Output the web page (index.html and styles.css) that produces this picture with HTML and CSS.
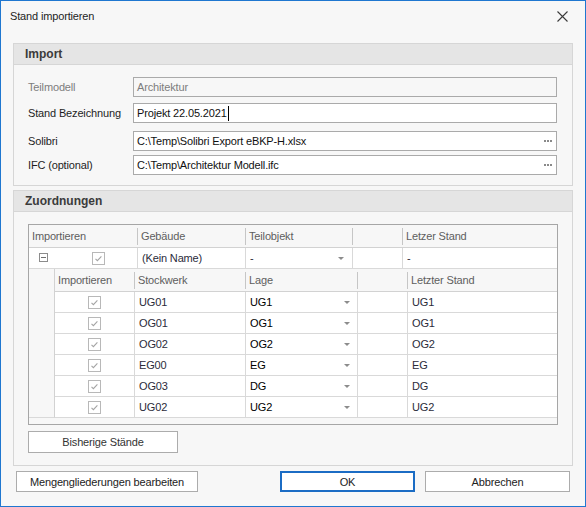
FILE: index.html
```html
<!DOCTYPE html>
<html>
<head>
<meta charset="UTF-8">
<title>Stand importieren</title>
<link rel="stylesheet" href="styles.css">
</head>
<body>

<div class="window">

  <div class="titlebar">
    <span class="title">Stand importieren</span>
    <svg class="close" width="11" height="11" viewBox="0 0 11 11">
      <path d="M0.5 0.5 L10.5 10.5 M10.5 0.5 L0.5 10.5" stroke="#3a3a3a" stroke-width="1.1" fill="none"/>
    </svg>
  </div>

  <div class="content">

    <!-- Import -->
    <div class="group">
      <div class="group-header">Import</div>
      <div class="group-body form">
        <div class="form-row">
          <span class="lbl disabled">Teilmodell</span>
          <div class="input readonly">Architektur</div>
        </div>
        <div class="form-row r2">
          <span class="lbl">Stand Bezeichnung</span>
          <div class="input"><span class="caret">Projekt 22.05.2021</span></div>
        </div>
        <div class="form-row r3">
          <span class="lbl">Solibri</span>
          <div class="input">
            <span class="val">C:\Temp\Solibri Export eBKP-H.xlsx</span>
            <svg class="dots" width="8" height="2" viewBox="0 0 8 2"><rect x="0" width="2" height="2" fill="#8a8a8a"/><rect x="3" width="2" height="2" fill="#8a8a8a"/><rect x="6" width="2" height="2" fill="#8a8a8a"/></svg>
          </div>
        </div>
        <div class="form-row r4">
          <span class="lbl">IFC (optional)</span>
          <div class="input">
            <span class="val">C:\Temp\Architektur Modell.ifc</span>
            <svg class="dots" width="8" height="2" viewBox="0 0 8 2"><rect x="0" width="2" height="2" fill="#8a8a8a"/><rect x="3" width="2" height="2" fill="#8a8a8a"/><rect x="6" width="2" height="2" fill="#8a8a8a"/></svg>
          </div>
        </div>
      </div>
    </div>

    <!-- Zuordnungen -->
    <div class="group group-map">
      <div class="group-header">Zuordnungen</div>
      <div class="group-body map">
        <div class="grid">

          <div class="row row-head">
            <div class="hc c1 first">Importieren</div>
            <div class="hc c2">Gebäude</div>
            <div class="hc c3">Teilobjekt</div>
            <div class="hc c4"></div>
            <div class="hc c5">Letzer Stand</div>
          </div>

          <div class="row row-data row-main">
            <div class="dc c1 first">
              <svg class="collapse" width="9" height="9" viewBox="0 0 9 9"><rect x="0.5" y="0.5" width="8" height="8" fill="#fff" stroke="#8c8c8c"/><path d="M2 4.5 H7" stroke="#6e6e6e"/></svg>
              <svg class="check main-check" width="13" height="13" viewBox="0 0 13 13"><rect x="0.5" y="0.5" width="12" height="12" fill="#fff" stroke="#b8b8b8"/><path d="M3.5 6.8 L5.4 8.6 L9.4 4.4" stroke="#a4a4a4" stroke-width="1.1" fill="none"/></svg>
            </div>
            <div class="dc c2">(Kein Name)</div>
            <div class="dc c3 combo"><span>-</span><i class="arrow"></i></div>
            <div class="dc c4"></div>
            <div class="dc c5">-</div>
          </div>

          <div class="detail">
            <div class="indent"></div>
            <div class="subgrid">
              <div class="row row-head">
                <div class="hc s1 first">Importieren</div>
                <div class="hc s2">Stockwerk</div>
                <div class="hc s3">Lage</div>
                <div class="hc s4"></div>
                <div class="hc s5">Letzter Stand</div>
              </div>
              <div class="row row-data">
                <div class="dc s1 first center"><svg class="check" width="13" height="13" viewBox="0 0 13 13"><rect x="0.5" y="0.5" width="12" height="12" fill="#fff" stroke="#b8b8b8"/><path d="M3.5 6.8 L5.4 8.6 L9.4 4.4" stroke="#a4a4a4" stroke-width="1.1" fill="none"/></svg></div>
                <div class="dc s2">UG01</div>
                <div class="dc s3 combo strong"><span>UG1</span><i class="arrow"></i></div>
                <div class="dc s4"></div>
                <div class="dc s5">UG1</div>
              </div>
              <div class="row row-data">
                <div class="dc s1 first center"><svg class="check" width="13" height="13" viewBox="0 0 13 13"><rect x="0.5" y="0.5" width="12" height="12" fill="#fff" stroke="#b8b8b8"/><path d="M3.5 6.8 L5.4 8.6 L9.4 4.4" stroke="#a4a4a4" stroke-width="1.1" fill="none"/></svg></div>
                <div class="dc s2">OG01</div>
                <div class="dc s3 combo strong"><span>OG1</span><i class="arrow"></i></div>
                <div class="dc s4"></div>
                <div class="dc s5">OG1</div>
              </div>
              <div class="row row-data">
                <div class="dc s1 first center"><svg class="check" width="13" height="13" viewBox="0 0 13 13"><rect x="0.5" y="0.5" width="12" height="12" fill="#fff" stroke="#b8b8b8"/><path d="M3.5 6.8 L5.4 8.6 L9.4 4.4" stroke="#a4a4a4" stroke-width="1.1" fill="none"/></svg></div>
                <div class="dc s2">OG02</div>
                <div class="dc s3 combo strong"><span>OG2</span><i class="arrow"></i></div>
                <div class="dc s4"></div>
                <div class="dc s5">OG2</div>
              </div>
              <div class="row row-data">
                <div class="dc s1 first center"><svg class="check" width="13" height="13" viewBox="0 0 13 13"><rect x="0.5" y="0.5" width="12" height="12" fill="#fff" stroke="#b8b8b8"/><path d="M3.5 6.8 L5.4 8.6 L9.4 4.4" stroke="#a4a4a4" stroke-width="1.1" fill="none"/></svg></div>
                <div class="dc s2">EG00</div>
                <div class="dc s3 combo strong"><span>EG</span><i class="arrow"></i></div>
                <div class="dc s4"></div>
                <div class="dc s5">EG</div>
              </div>
              <div class="row row-data">
                <div class="dc s1 first center"><svg class="check" width="13" height="13" viewBox="0 0 13 13"><rect x="0.5" y="0.5" width="12" height="12" fill="#fff" stroke="#b8b8b8"/><path d="M3.5 6.8 L5.4 8.6 L9.4 4.4" stroke="#a4a4a4" stroke-width="1.1" fill="none"/></svg></div>
                <div class="dc s2">OG03</div>
                <div class="dc s3 combo strong"><span>DG</span><i class="arrow"></i></div>
                <div class="dc s4"></div>
                <div class="dc s5">DG</div>
              </div>
              <div class="row row-data">
                <div class="dc s1 first center"><svg class="check" width="13" height="13" viewBox="0 0 13 13"><rect x="0.5" y="0.5" width="12" height="12" fill="#fff" stroke="#b8b8b8"/><path d="M3.5 6.8 L5.4 8.6 L9.4 4.4" stroke="#a4a4a4" stroke-width="1.1" fill="none"/></svg></div>
                <div class="dc s2">UG02</div>
                <div class="dc s3 combo strong"><span>UG2</span><i class="arrow"></i></div>
                <div class="dc s4"></div>
                <div class="dc s5">UG2</div>
              </div>
            </div>
          </div>

        </div>
        <button class="btn btn-hist">Bisherige Stände</button>
      </div>
    </div>

    <div class="footer">
      <button class="btn btn-mengen">Mengengliederungen bearbeiten</button>
      <button class="btn btn-ok">OK</button>
      <button class="btn btn-cancel">Abbrechen</button>
    </div>

  </div>
</div>

</body>
</html>
```

FILE: styles.css
```css
* {
  box-sizing: border-box;
}

body {
  margin: 0;
  font-family: "Liberation Sans", Arial, sans-serif;
  font-size: 11px;
  letter-spacing: -0.15px;
  color: #1e1e1e;
}

.window {
  width: 586px;
  height: 507px;
  border: 1px solid #1f77d0;
  background-color: #f7f7f7;
}

/* title bar */
.titlebar {
  height: 42px;
  display: flex;
  justify-content: space-between;
  align-items: flex-start;
  padding: 7px 17px 0 9px;
}

.title {
  line-height: 16px;
  font-size: 11px;
  color: #1e1e1e;
}

.close {
  margin-top: 3px;
}

.content {
  padding: 0 12px;
}

/* group boxes */
.group {
  border: 1px solid #d6d6d6;
}

.group-map {
  margin-top: 4px;
}

.group-header {
  height: 21px;
  line-height: 20px;
  padding-left: 11px;
  background-color: #e5e5e5;
  border-bottom: 1px solid #d6d6d6;
  font-weight: bold;
  font-size: 12px;
  letter-spacing: 0;
  color: #3b3b3b;
}

.form {
  padding: 12px 15px 10px 14px;
}

.form-row {
  display: flex;
  align-items: center;
  height: 20px;
}

.form-row.r2 { margin-top: 6px; }
.form-row.r3 { margin-top: 8px; }
.form-row.r4 { margin-top: 4px; }

.lbl {
  width: 105px;
  color: #1e1e1e;
}

.lbl.disabled {
  color: #7d7d7d;
}

.input {
  width: 424px;
  height: 20px;
  border: 1px solid #aaaaaa;
  background-color: #fff;
  padding: 0 4px 0 3px;
  line-height: 18px;
  display: flex;
  align-items: center;
  justify-content: space-between;
  color: #111;
}

.input.readonly {
  background-color: #f7f7f7;
  color: #7d7d7d;
}

.caret {
  border-right: 1px solid #000;
  padding-right: 1px;
  line-height: 15px;
}

/* grid */
.map {
  padding: 12px 15px 12px 14px;
}

.grid {
  width: 530px;
  height: 201px;
  border: 1px solid #a6a6a6;
  background-color: #f7f7f7;
}

.row {
  display: flex;
}

.row-head {
  height: 23px;
  border-bottom: 1px solid #d2d2d2;
}

.row-data {
  height: 21px;
  background-color: #fff;
  border-bottom: 1px solid #d9d9d9;
}

.hc {
  margin: 3px 0 2px;
  line-height: 17px;
  padding-left: 3px;
  border-left: 1px solid #c6c6c6;
  color: #5e5e5e;
  white-space: nowrap;
}

.dc {
  display: flex;
  align-items: center;
  padding-left: 4px;
  border-left: 1px solid #d9d9d9;
  color: #2b2b3a;
  white-space: nowrap;
}

.hc.first,
.dc.first {
  border-left: none;
}

.c1 { width: 108px; }
.c2 { width: 108px; }
.c3 { width: 107px; }
.c4 { width: 50px; }
.c5 { width: 155px; }

.s1 { width: 79px; }
.s2 { width: 111px; }
.s3 { width: 112px; }
.s4 { width: 50px; }
.s5 { width: 150px; }

.row-main .c1 {
  padding-left: 10px;
}

.collapse {
  margin-top: -1px;
}

.main-check {
  margin-left: 44px;
}

.dc.center {
  justify-content: center;
  padding-left: 0;
}

.combo {
  justify-content: space-between;
  padding-right: 8px;
}

.detail .combo {
  padding-right: 7px;
}

.strong {
  color: #000;
}

.arrow {
  width: 0;
  height: 0;
  border-left: 3px solid transparent;
  border-right: 3px solid transparent;
  border-top: 3px solid #8c8c8c;
}

.detail {
  display: flex;
}

.indent {
  width: 26px;
  height: 149px;
  border-right: 1px solid #d2d2d2;
  border-bottom: 1px solid #d9d9d9;
}

.subgrid {
  width: 502px;
}

/* buttons */
.btn {
  font-family: "Liberation Sans", Arial, sans-serif;
  font-size: 11px;
  letter-spacing: -0.15px;
  color: #222;
  background-color: #fff;
  border: 1px solid #acacac;
  padding: 0;
  height: 21px;
}

.btn-hist {
  display: block;
  margin-top: 6px;
  width: 150px;
  height: 22px;
  color: #333;
}

.footer {
  display: flex;
  margin-top: 5px;
  padding: 0 3px;
}

.btn-mengen {
  width: 182px;
}

.btn-ok {
  margin-left: auto;
  width: 135px;
  border: 2px solid #1b6cc4;
}

.btn-cancel {
  margin-left: 10px;
  width: 145px;
}
```
